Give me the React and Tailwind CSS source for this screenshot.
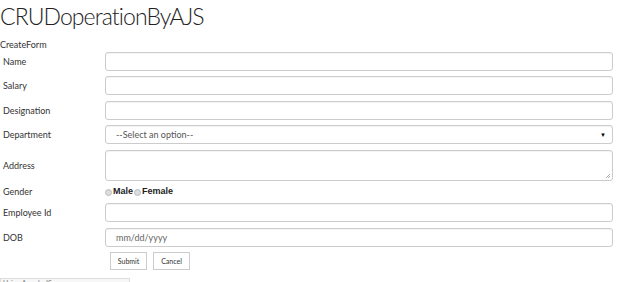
import React from "react";

const font = { fontFamily: 'Lato, "Liberation Sans", Arial, sans-serif' };

function Row({ label, children, h = "h-[19px]", mt = "mt-[5px]" }) {
  return (
    <div className={`flex items-center ${mt}`}>
      <label className="w-[105px] shrink-0 pl-[3px] text-[9px] leading-[11px] text-[#333]">{label}</label>
      <div className={`w-[508px] ${h}`}>{children}</div>
    </div>
  );
}

const inputCls =
  "block w-full h-full border border-[#ccc] rounded-[3px] bg-white px-[10px] text-[9px] text-[#555] outline-none shadow-[inset_0_1px_1px_rgba(0,0,0,0.05)]";

export default function App() {
  return (
    <div className="w-[624px] h-[282px] bg-white overflow-hidden relative" style={font}>
      <h1 className="text-[23px] leading-[30px] font-light text-[#222] pt-[1px] tracking-[-0.9px]">
        CRUDoperationByAJS
      </h1>
      <div className="text-[9px] text-[#333] mt-[8px] leading-[11px]">CreateForm</div>
      <Row label="Name" mt="mt-[2px]">
        <input className={inputCls} />
      </Row>
      <Row label="Salary">
        <input className={inputCls} />
      </Row>
      <Row label="Designation" mt="mt-[6px]">
        <input className={inputCls} />
      </Row>
      <Row label="Department" mt="mt-[5px]">
        <div className={`${inputCls} flex items-center justify-between pr-[6px]`}>
          <span>--Select an option--</span>
          <span className="text-[6px] text-black">▼</span>
        </div>
      </Row>
      <Row label="Address" h="h-[31px]" mt="mt-[6px]">
        <div className={`${inputCls} relative`}>
          <svg className="absolute right-[1px] bottom-[1px]" width="6" height="6" viewBox="0 0 6 6">
            <path d="M5 1L1 5M5 3L3 5" stroke="#999" strokeWidth="0.8" />
          </svg>
        </div>
      </Row>
      <div className="flex items-center mt-[5px] h-[12px]">
        <label className="w-[105px] shrink-0 pl-[3px] text-[9px] text-[#333]">Gender</label>
        <div className="flex items-center text-[9px] font-bold text-[#222]" style={{ fontFamily: '"Liberation Sans", Arial, sans-serif' }}>
          <span className="w-[7px] h-[7px] rounded-full bg-[#ddd] border border-[#bbb] mr-[1px]" />
          <span>Male</span>
          <span className="w-[7px] h-[7px] rounded-full bg-[#ddd] border border-[#bbb] mx-[1px]" />
          <span>Female</span>
        </div>
      </div>
      <Row label="Employee Id" mt="mt-[5px]">
        <input className={inputCls} />
      </Row>
      <Row label="DOB" mt="mt-[6px]">
        <div className={`${inputCls} flex items-center text-[#666]`}>mm/dd/yyyy</div>
      </Row>
      <div className="flex gap-[6px] ml-[110px] mt-[5px]">
        <button className="w-[37px] h-[18px] border border-[#ccc] bg-white text-[7px] text-[#333]">Submit</button>
        <button className="w-[37px] h-[18px] border border-[#ccc] bg-white text-[7px] text-[#333]">Cancel</button>
      </div>
      <div className="absolute left-0 top-[278px] w-[130px] h-[10px] border border-[#ddd] bg-[#f7f7f7] text-[7px] text-[#777] leading-[8px] pl-[2px]">
        Using AngularJS
      </div>
    </div>
  );
}
